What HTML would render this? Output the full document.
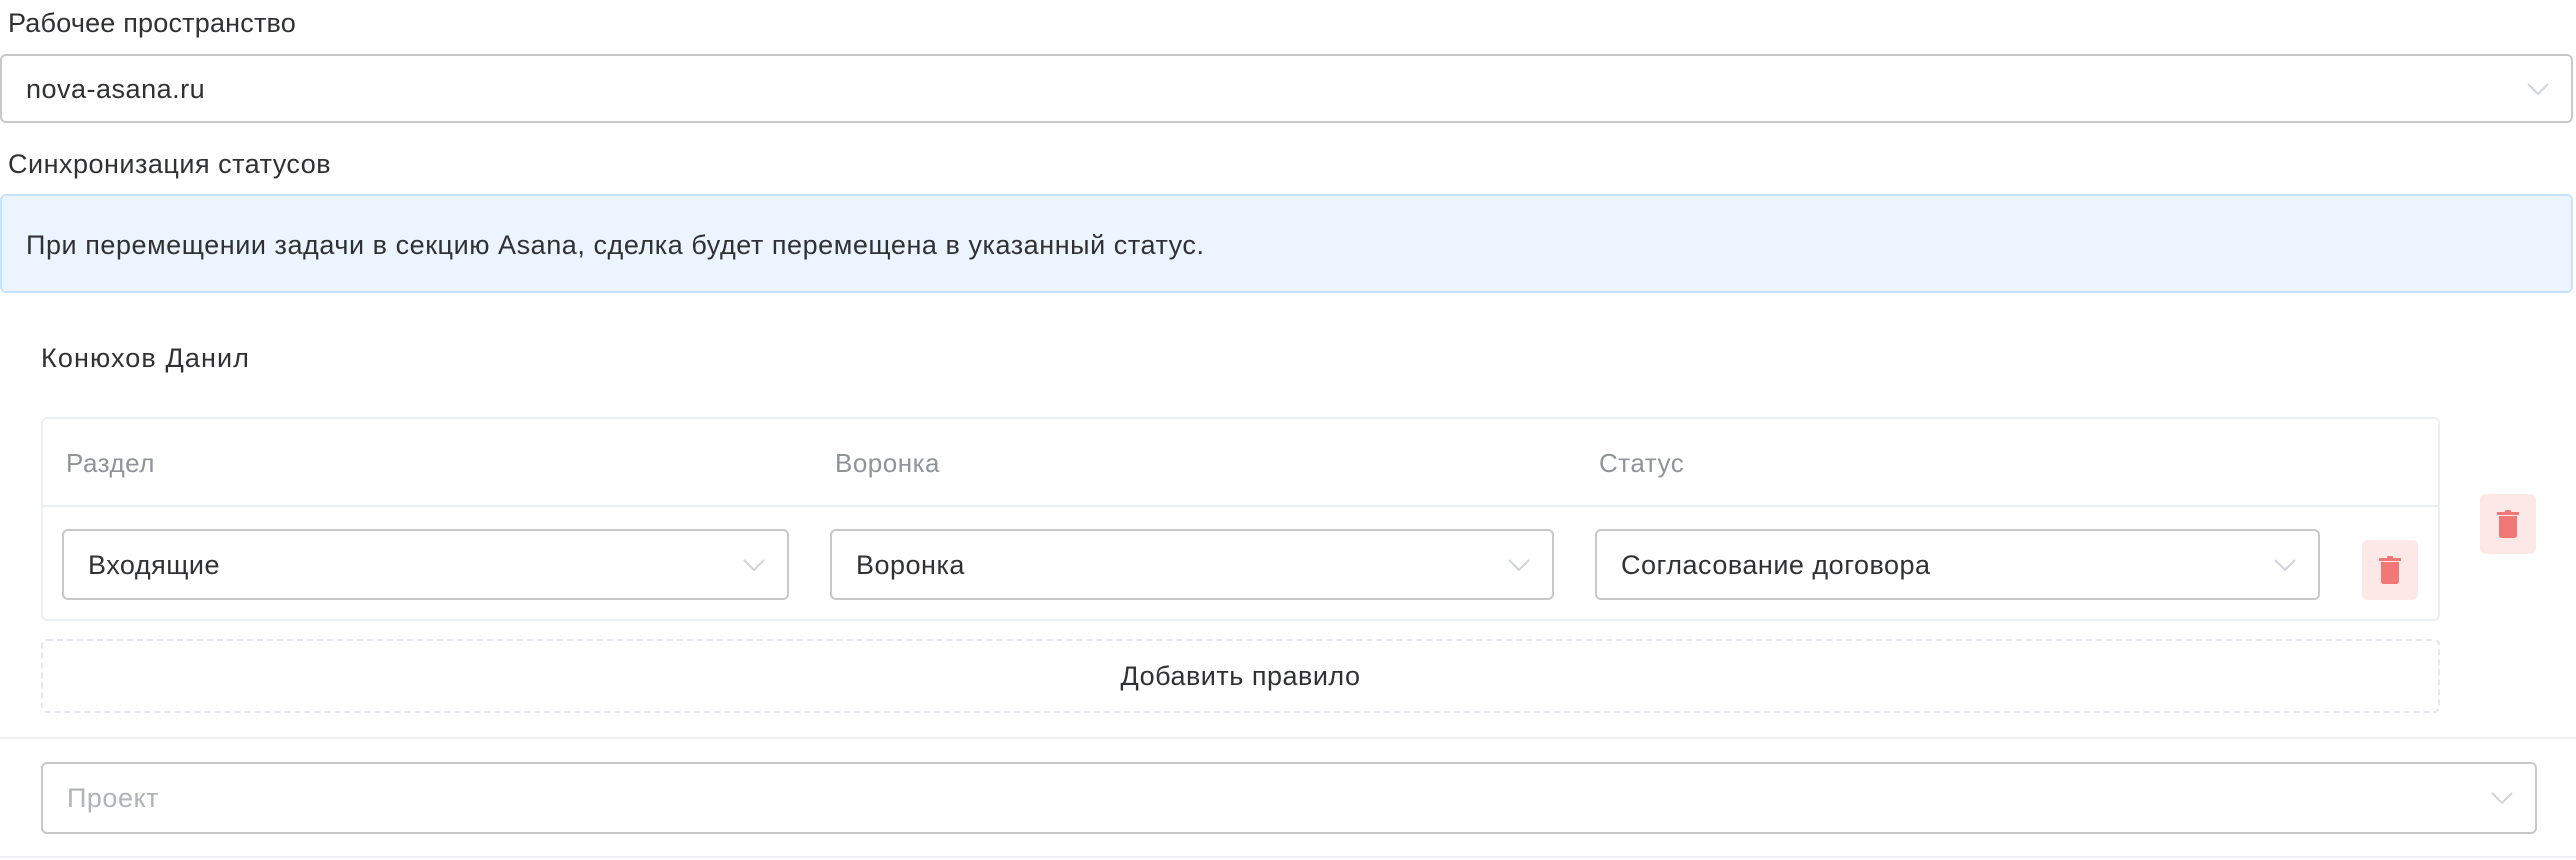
<!DOCTYPE html>
<html><head><meta charset="utf-8"><style>
*{box-sizing:border-box;margin:0;padding:0}
body{width:2576px;height:860px;background:#fff;font-family:"Liberation Sans",sans-serif;color:#303133;position:relative;overflow:hidden;letter-spacing:0.5px}
.a{position:absolute}
.lbl{font-size:27px;color:#303133;line-height:30px}
.sel{position:absolute;border:2px solid #c8c8c8;border-radius:6px;background:#fff;font-size:27px;line-height:30px;display:flex;align-items:center;padding-left:24px}
.sel svg{position:absolute;right:22px;top:50%;margin-top:-7px}
.th{font-size:26px;color:#909399;line-height:30px}
.tr{position:absolute;background:#fde8e8;border-radius:6px;display:flex;align-items:center;justify-content:center}
</style></head><body>
<div class="a lbl" style="left:8px;top:8px;letter-spacing:0.2px">Рабочее пространство</div>
<div class="sel" style="left:0;top:54px;width:2573px;height:69px">nova-asana.ru<svg width="22" height="14" viewBox="0 0 22 14"><path d="M1 2 L11 12 L21 2" fill="none" stroke="#d0d3d9" stroke-width="2"/></svg></div>
<div class="a lbl" style="left:8px;top:149px">Синхронизация статусов</div>
<div class="a" style="left:0;top:194px;width:2573px;height:99px;background:#ecf5ff;border:2px solid #c6e2ff;border-radius:6px;font-size:27px;line-height:30px;padding:34px 0 0 24px;color:#303133;letter-spacing:0.55px">При перемещении задачи в секцию Asana, сделка будет перемещена в указанный статус.</div>
<div class="a lbl" style="left:41px;top:343px;letter-spacing:1.1px">Конюхов Данил</div>
<div class="a" style="left:41px;top:417px;width:2399px;height:204px;border:2px solid #ebeef5;border-radius:6px"></div>
<div class="a" style="left:41px;top:505px;width:2399px;height:2px;background:#ebeef5"></div>
<div class="a th" style="left:66px;top:448px">Раздел</div>
<div class="a th" style="left:835px;top:448px">Воронка</div>
<div class="a th" style="left:1599px;top:448px">Статус</div>
<div class="sel" style="left:62px;top:529px;width:727px;height:71px">Входящие<svg width="22" height="14" viewBox="0 0 22 14"><path d="M1 2 L11 12 L21 2" fill="none" stroke="#d0d3d9" stroke-width="2"/></svg></div>
<div class="sel" style="left:830px;top:529px;width:724px;height:71px">Воронка<svg width="22" height="14" viewBox="0 0 22 14"><path d="M1 2 L11 12 L21 2" fill="none" stroke="#d0d3d9" stroke-width="2"/></svg></div>
<div class="sel" style="left:1595px;top:529px;width:725px;height:71px">Согласование договора<svg width="22" height="14" viewBox="0 0 22 14"><path d="M1 2 L11 12 L21 2" fill="none" stroke="#d0d3d9" stroke-width="2"/></svg></div>
<div class="tr" style="left:2362px;top:540px;width:56px;height:60px"><svg width="22" height="28" viewBox="0 0 22 28"><rect x="8" y="0" width="6" height="3" rx="1" fill="#f27777"/><rect x="0" y="2" width="22" height="3" fill="#f27777"/><path d="M2 6 H20 V25 Q20 28 17 28 H5 Q2 28 2 25 Z" fill="#f27777"/></svg></div>
<div class="tr" style="left:2480px;top:494px;width:56px;height:60px"><svg width="22" height="28" viewBox="0 0 22 28"><rect x="8" y="0" width="6" height="3" rx="1" fill="#f27777"/><rect x="0" y="2" width="22" height="3" fill="#f27777"/><path d="M2 6 H20 V25 Q20 28 17 28 H5 Q2 28 2 25 Z" fill="#f27777"/></svg></div>
<div class="a" style="left:41px;top:639px;width:2399px;height:74px;border:2px dashed #e4e7ed;border-radius:6px;font-size:27px;line-height:70px;text-align:center;color:#303133">Добавить правило</div>
<div class="a" style="left:0;top:737px;width:2576px;height:2px;background:#f0f0f5"></div>
<div class="sel" style="left:41px;top:762px;width:2496px;height:72px;color:#b0b3b8">Проект<svg width="22" height="14" viewBox="0 0 22 14"><path d="M1 2 L11 12 L21 2" fill="none" stroke="#d0d3d9" stroke-width="2"/></svg></div>
<div class="a" style="left:0;top:856px;width:2576px;height:2px;background:#f0f0f5"></div>
</body></html>
